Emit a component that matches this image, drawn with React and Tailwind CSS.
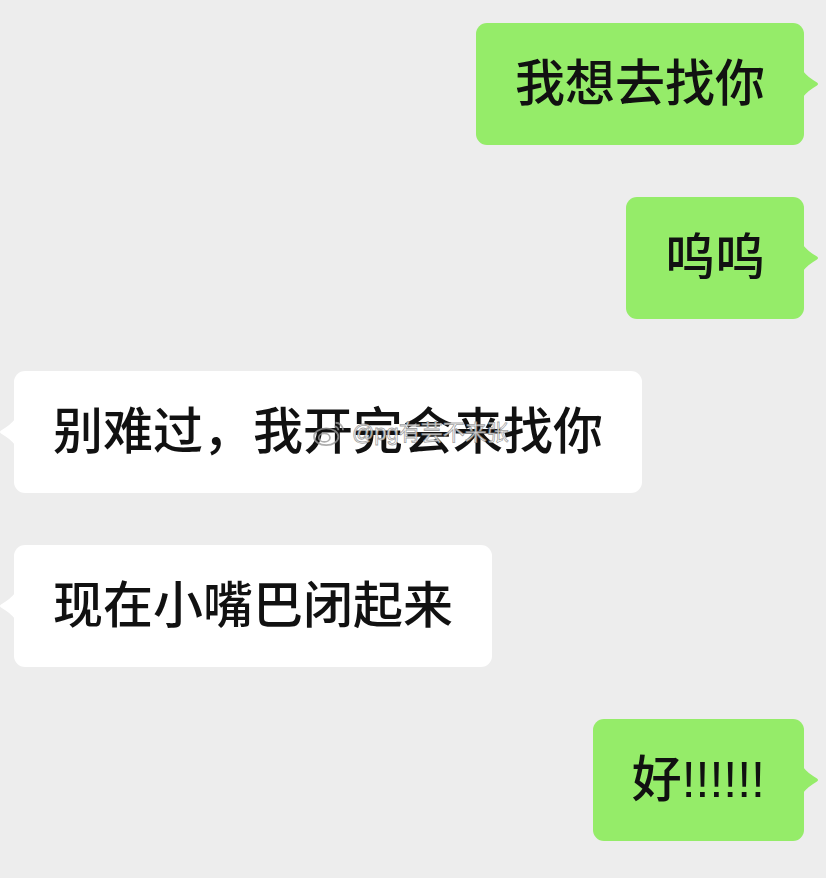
import React from 'react';

const messages = [
    { id: 1, from: 'me', text: '我想去找你' },
    { id: 2, from: 'me', text: '呜呜' },
    { id: 3, from: 'them', text: '别难过，我开完会来找你', watermark: true },
    { id: 4, from: 'them', text: '现在小嘴巴闭起来' },
    { id: 5, from: 'me', text: '好!!!!!!' },
];

const Tail = ({ side, color }) => (
    <svg
        width="16"
        height="30"
        viewBox="0 0 16 30"
        className={`absolute top-1/2 -translate-y-1/2 ${side === 'right' ? '-right-[15px]' : '-left-[15px] -scale-x-100'}`}
    >
        <path d="M0 2 C3 6 8 10 14 13.5 Q16 15 14 16.5 C8 20 3 24 0 28 Z" fill={color} />
    </svg>
);

// weibo watermark that sits over the third bubble
const Watermark = () => (
    <div className="absolute left-[298px] top-[48px] flex items-center gap-[6px] pointer-events-none select-none">
        <svg width="34" height="28" viewBox="0 0 36 30" className="opacity-80">
            <ellipse cx="15" cy="19" rx="13" ry="9" fill="none" stroke="#9a9a9a" strokeWidth="2" />
            <ellipse cx="13" cy="20" rx="6" ry="4.5" fill="none" stroke="#9a9a9a" strokeWidth="1.8" />
            <path d="M25 4 A8 8 0 0 1 33 12" fill="none" stroke="#9a9a9a" strokeWidth="2" />
            <path d="M24 8 A4 4 0 0 1 28 12" fill="none" stroke="#9a9a9a" strokeWidth="2" />
        </svg>
        <span
            className="text-[22px] leading-none font-normal text-white/80"
            style={{ WebkitTextStroke: '0.8px rgba(130,130,130,0.75)' }}
        >
            @pg有芸不来张
        </span>
    </div>
);

const Bubble = ({ msg }) => {
    const mine = msg.from === 'me';
    const color = mine ? '#95ec69' : '#ffffff';
    return (
        <div className={`flex ${mine ? 'justify-end pr-[22px]' : 'justify-start pl-[14px]'}`}>
            <div
                className={`relative rounded-[11px] px-[39px] py-[36px] text-[50px] leading-[50px] font-medium text-[#111111] whitespace-nowrap ${mine ? 'bg-[#95ec69]' : 'bg-white'}`}
            >
                <Tail side={mine ? 'right' : 'left'} color={color} />
                {msg.text}
                {msg.watermark && <Watermark />}
            </div>
        </div>
    );
};

export default function App() {
    return (
        <div
            className="w-[826px] h-[878px] bg-[#ededed] overflow-hidden pt-[23px] flex flex-col gap-[52px]"
            style={{ fontFamily: '"Liberation Sans", "Noto Sans CJK SC", sans-serif' }}
        >
            {messages.map(m => (
                <Bubble key={m.id} msg={m} />
            ))}
        </div>
    );
}
